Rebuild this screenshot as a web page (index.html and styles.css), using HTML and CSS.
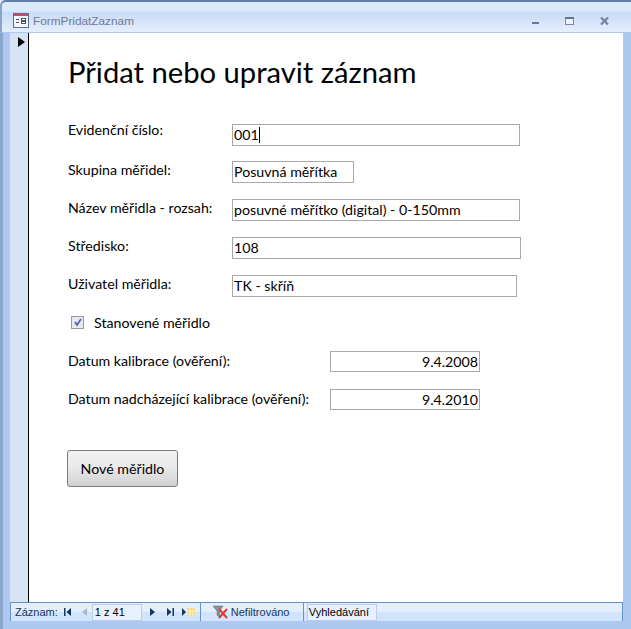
FILE: index.html
```html
<!DOCTYPE html>
<html lang="cs">
<head>
  <meta charset="UTF-8">
  <title>FormPridatZaznam</title>
  <link rel="stylesheet" href="styles.css">
</head>
<body>
  <div class="window">
    <div class="titlebar">
      <svg class="form-icon" width="16" height="15" viewBox="0 0 16 15">
        <rect x="0.500" y="0.500" width="15" height="14" fill="#f4f6fb" stroke="#5c6f8f"/>
        <rect x="1" y="1" width="14" height="2" fill="#c0506a"/>
        <path d="M3 6.500h3M3 9.500h3" stroke="#44546e"/>
        <rect x="8.500" y="5.500" width="4" height="2" fill="#fff" stroke="#44546e"/>
        <rect x="8.500" y="8.500" width="4" height="2" fill="#fff" stroke="#44546e"/>
      </svg>
      <span class="title">FormPridatZaznam</span>
      <div class="win-buttons">
        <svg class="btn-min" width="7" height="2" viewBox="0 0 7 2"><rect width="7" height="2" fill="#6c7a90"/></svg>
        <svg width="9" height="8" viewBox="0 0 9 8"><rect x="0.500" y="0.500" width="8" height="7" fill="#e8f1fd" stroke="#7b8ba5"/><rect width="9" height="2" fill="#66748c"/></svg>
        <svg width="9" height="8" viewBox="0 0 9 8"><path d="M1 .5l7 7M8 .5l-7 7" stroke="#72849f" stroke-width="2.200"/></svg>
      </div>
    </div>

    <div class="middle">
      <div class="selector">
        <svg width="7" height="10" viewBox="0 0 7 10"><path d="M0 0l7 5-7 5z" fill="#000"/></svg>
      </div>
      <form class="form">
        <h1>Přidat nebo upravit záznam</h1>

        <div class="row row-first">
          <label>Evidenční číslo:</label>
          <div class="field w-288">001<span class="caret"></span></div>
        </div>
        <div class="row">
          <label>Skupina měřidel:</label>
          <div class="field w-122">Posuvná měřítka</div>
        </div>
        <div class="row">
          <label>Název měřidla - rozsah:</label>
          <div class="field w-288">posuvné měřítko (digital) - 0-150mm</div>
        </div>
        <div class="row">
          <label>Středisko:</label>
          <div class="field w-289">108</div>
        </div>
        <div class="row">
          <label>Uživatel měřidla:</label>
          <div class="field w-285">TK - skříň</div>
        </div>

        <div class="check-row">
          <span class="checkbox">
            <svg width="10" height="10" viewBox="0 0 10 10"><path d="M2 5l2 3 4-6" fill="none" stroke="#4a5fa5" stroke-width="1.600"/></svg>
          </span>
          <span>Stanovené měřidlo</span>
        </div>

        <div class="row date-row">
          <label>Datum kalibrace (ověření):</label>
          <div class="field date">9.4.2008</div>
        </div>
        <div class="row date-row">
          <label>Datum nadcházející kalibrace (ověření):</label>
          <div class="field date">9.4.2010</div>
        </div>

        <button type="button" class="new-btn">Nové měřidlo</button>
      </form>
    </div>

    <div class="navbar">
      <span class="nav-label">Záznam:</span>
      <svg class="nav-first" width="7" height="8" viewBox="0 0 7 8"><path d="M0 0h1.500v8H0zM7 0v8L2.500 4z" fill="#14365f"/></svg>
      <svg class="nav-prev" width="5" height="8" viewBox="0 0 5 8"><path d="M5 0v8L0 4z" fill="#a9b8cb"/></svg>
      <div class="nav-input">1 z 41</div>
      <svg class="nav-next" width="5" height="8" viewBox="0 0 5 8"><path d="M0 0v8l5-4z" fill="#14365f"/></svg>
      <svg class="nav-last" width="7" height="8" viewBox="0 0 7 8"><path d="M0 0v8l4.500-4zM5.500 0H7v8H5.500z" fill="#14365f"/></svg>
      <svg class="nav-new" width="13" height="8" viewBox="0 0 13 8"><path d="M0 0v8l4-4z" fill="#14365f"/><path d="M5 0h8v8H5z" fill="#f3d77c"/><path d="M8 0v8M11 0v8M5 3h8M5 6h8" stroke="#fbf0c4"/></svg>
      <div class="nav-sep filter">
        <svg width="17" height="15" viewBox="0 0 17 15"><path d="M0 1h10L6.500 6v6L4 10V6z" fill="#8a8f98" stroke="#5c6068" stroke-width="0.500"/><path d="M6 4l8 9M14 4l-8 9" stroke="#e03a2e" stroke-width="2"/></svg>
        <span>Nefiltrováno</span>
      </div>
      <div class="nav-sep search-wrap">
        <div class="search">Vyhledávání</div>
      </div>
    </div>
  </div>
</body>
</html>
```

FILE: styles.css
```css
html, body {
  margin: 0;
  padding: 0;
}
body {
  width: 631px;
  height: 629px;
  overflow: hidden;
  font-family: Lato, "Open Sans", sans-serif;
  background-color: #dfe9f7;
}
.window {
  width: 631px;
  height: 629px;
  box-sizing: border-box;
  display: flex;
  flex-direction: column;
  background-color: #aec8ef;
  border-left: 3px solid #8aa5ca;
  border-top-left-radius: 6px;
  padding-bottom: 8px;
}

/* title bar */
.titlebar {
  height: 33px;
  margin-left: -3px;
  box-sizing: border-box;
  display: flex;
  align-items: center;
  padding: 7px 0 0 13px;
  border-top: 2px solid #5f80ae;
  border-left: 2px solid #8aa5ca;
  border-top-left-radius: 6px;
  border-bottom: 1px solid #a9c9f2;
  background: linear-gradient(to bottom, #dce9fb 0, #dce9fb 9px, #c8daf6 10px, #e4effd 100%);
}
.form-icon {
  margin-left: -2px;
  margin-right: 4px;
}
.title {
  font-family: "Liberation Sans", Arial, sans-serif;
  font-size: 11.800px;
  color: #6f7a94;
}
.win-buttons {
  margin-left: auto;
  display: flex;
  align-items: center;
  gap: 26px;
  padding-right: 22px;
}
.btn-min {
  margin-top: 5px;
}

/* record selector + form */
.middle {
  flex: 1;
  display: flex;
  min-height: 0;
  margin-right: 8px;
}
.selector {
  width: 18px;
  margin-left: 7px;
  flex-shrink: 0;
  box-sizing: content-box;
  background-color: #d5e3f4;
  border-right: 1px solid #000;
  padding-top: 4px;
}
.selector svg {
  display: block;
  margin-left: 8px;
}
.form {
  flex: 1;
  background-color: #fff;
  padding: 20px 0 0 39px;
  color: #000;
  font-size: 14.200px;
}
h1 {
  margin: 0 0 33px;
  font-weight: 400;
  font-size: 29.200px;
  line-height: 38px;
  white-space: nowrap;
}
.row {
  display: flex;
  align-items: flex-start;
  height: 22px;
  margin-bottom: 16px;
}
.row-first {
  margin-bottom: 15px;
}
.row label {
  width: 164px;
  flex-shrink: 0;
  line-height: 18px;
  white-space: nowrap;
}
.row-first label {
  margin-top: -3px;
}
.field {
  box-sizing: border-box;
  height: 22px;
  line-height: 20px;
  padding: 0 1px;
  border: 1px solid #a9a9a9;
  white-space: nowrap;
}
.w-288 { width: 288px; }
.w-122 { width: 122px; }
.w-289 { width: 289px; }
.w-285 { width: 285px; }
.caret {
  display: inline-block;
  width: 1px;
  height: 16px;
  background-color: #000;
  vertical-align: -3px;
}
.check-row {
  display: flex;
  align-items: center;
  height: 18px;
  margin: 0 0 20px 3px;
}
.checkbox {
  box-sizing: border-box;
  width: 13px;
  height: 13px;
  margin-right: 10px;
  border: 1px solid #9a9a9a;
  background-color: #e6e8f2;
  display: flex;
  align-items: center;
  justify-content: center;
}
.date-row label {
  width: 262px;
  line-height: 20px;
}
.date {
  width: 150px;
  height: 21px;
  line-height: 19px;
  text-align: right;
}
.new-btn {
  display: block;
  width: 111px;
  height: 37px;
  margin: 39px 0 0 -1px;
  padding: 0;
  font-family: inherit;
  font-size: 14.200px;
  color: #000;
  border: 1px solid #7b7b7b;
  border-radius: 3px;
  background: linear-gradient(to bottom, #f2f2f2 0, #e8e8e8 50%, #d0d0d0 100%);
}

/* navigation bar */
.navbar {
  height: 19px;
  margin: 0 8px 0 7px;
  box-sizing: border-box;
  display: flex;
  align-items: center;
  border-top: 1px solid #6591cd;
  border-left: 1px solid #6591cd;
  border-right: 1px solid #6591cd;
  background: linear-gradient(to bottom, #e4effe 0, #e4effe 50%, #d2e4fc 51%, #d2e4fc 100%);
  font-family: "Liberation Sans", Arial, sans-serif;
  font-size: 11px;
  color: #14365f;
}
.nav-label {
  margin-left: 4px;
}
.nav-first { margin-left: 6px; }
.nav-prev { margin-left: 11px; }
.nav-input {
  box-sizing: border-box;
  width: 50px;
  height: 17px;
  line-height: 15px;
  margin-left: 5px;
  padding-left: 2px;
  border: 1px solid #b9cde8;
  background-color: #e8f1fd;
  color: #000;
}
.nav-next { margin-left: 8px; }
.nav-last { margin-left: 12px; }
.nav-new { margin-left: 8px; }
.nav-sep {
  height: 100%;
  display: flex;
  align-items: center;
  border-left: 1px solid #6591cd;
}
.filter {
  margin-left: 5px;
  width: 103px;
  padding-left: 12px;
  box-sizing: border-box;
  gap: 1px;
}
.search-wrap {
  padding-left: 3px;
}
.search {
  box-sizing: border-box;
  height: 17px;
  line-height: 15px;
  width: 70px;
  padding-left: 1px;
  border: 1px solid #b9cde8;
  background-color: #e8f1fd;
  color: #000;
}
```
